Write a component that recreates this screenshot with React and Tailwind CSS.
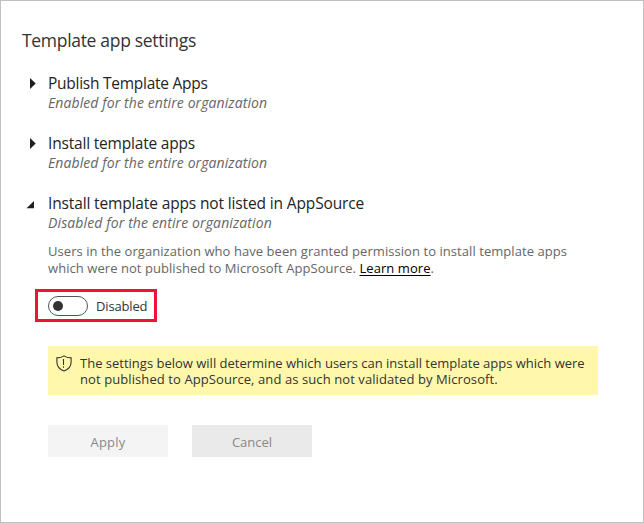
import React from "react";

function Setting({ title, titleClass, status, statusClass, open, children }) {
  return (
    <section className="flex">
      <div className="w-[26px] shrink-0 pt-[3px]">
        <svg width="16" height="14" viewBox="0 0 16 14" fill="#1f1f1f">
          {open ? <path d="M4.500 12.300 12 5v7.300z" /> : <path d="M8 2v11L13.700 7.500z" />}
        </svg>
      </div>
      <div>
        <h2 className={"h-5 whitespace-nowrap text-[15.5px] leading-5 text-[#252423] " + titleClass}>{title}</h2>
        <p className={"h-5 whitespace-nowrap text-sm leading-5 text-[#666] italic " + statusClass}>{status}</p>
        {children}
      </div>
    </section>
  );
}

function ShieldIcon() {
  return (
    <svg className="shrink-0" width="16" height="17" viewBox="0 0 16 17" fill="none" stroke="#333" strokeWidth="1.1">
      <path d="M8 .9C6.2 2.3 3.6 2.9.9 2.9V7c0 4.300 2.700 7.400 7.100 9.100 4.400-1.700 7.100-4.800 7.100-9.100V2.900C12.400 2.900 9.800 2.300 8 .9z" />
      <path d="M7.500 4v6M7.500 11.300v1.400" />
    </svg>
  );
}

export default function App() {
  return (
    <main className="h-[523px] w-[644px] border border-[#c0c0c0] bg-white pt-[28px] pl-[21px] font-['Open_Sans',sans-serif]">
      <h1 className="h-6 text-[17.5px] leading-[22px] tracking-[-0.31px] text-[#333]">Template app settings</h1>
      <div className="mt-5 flex flex-col gap-5">
        <Setting
          title="Publish Template Apps"
          titleClass="tracking-[-0.26px]"
          status="Enabled for the entire organization"
          statusClass="tracking-[0.09px]"
        />
        <Setting
          title="Install template apps"
          titleClass="tracking-[-0.19px]"
          status="Enabled for the entire organization"
          statusClass="tracking-[0.09px]"
        />
        <Setting
          open
          title="Install template apps not listed in AppSource"
          titleClass="tracking-[-0.14px]"
          status="Disabled for the entire organization"
          statusClass="tracking-[0.12px]"
        >
          <p className="mt-[10px] text-[13px] leading-[17px] tracking-[0.06px] whitespace-nowrap text-[#666]">
            Users in the organization who have been granted permission to install template apps
            <br />
            which were not published to Microsoft AppSource.{" "}
            <a className="text-black underline underline-offset-2">Learn more</a>.
          </p>
          <div className="mt-3 -ml-[13px] flex h-[33px] w-[122px] items-center border-[3px] border-[#f01339] pl-[10px]">
            <span className="flex h-5 w-10 items-center rounded-full border border-[#555] pl-1">
              <span className="h-[10px] w-[10px] rounded-full bg-[#333]" />
            </span>
            <span className="ml-2 text-[13px] leading-5 tracking-[-0.15px] text-[#333]">Disabled</span>
          </div>
          <div className="mt-6 flex h-[49px] w-[550px] gap-2 bg-[#fff8ac] pt-[9px] pl-2">
            <ShieldIcon />
            <div className="text-[13px] leading-4 whitespace-nowrap text-[#333]">
              <p>The settings below will determine which users can install template apps which were</p>
              <p className="tracking-[0.09px]">not published to AppSource, and as such not validated by Microsoft.</p>
            </div>
          </div>
          <div className="mt-[30px] flex gap-6 text-[13px] text-[#888]">
            <button className="h-8 w-[120px] bg-[#f4f4f4] pt-[3px] tracking-[0.2px]">Apply</button>
            <button className="h-8 w-[120px] bg-[#eaeaea] pt-[3px]">Cancel</button>
          </div>
        </Setting>
      </div>
    </main>
  );
}
